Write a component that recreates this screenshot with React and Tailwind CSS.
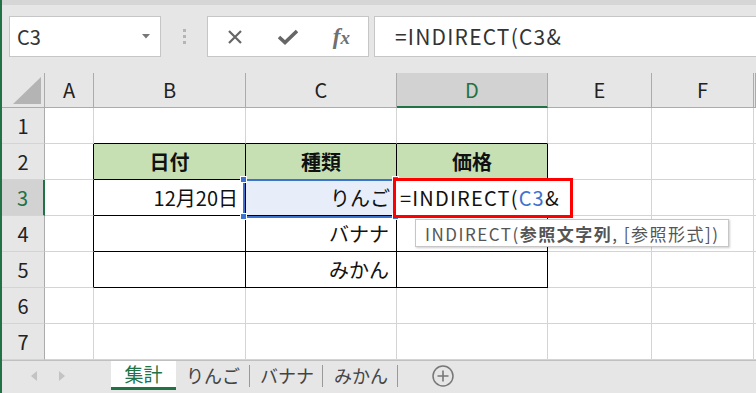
import React from 'react';

const COLS = [
  { key: 'hdr', w: 'w-[43px]' },
  { key: 'A', w: 'w-[49px]' },
  { key: 'B', w: 'w-[152px]' },
  { key: 'C', w: 'w-[151px]' },
  { key: 'D', w: 'w-[151px]' },
  { key: 'E', w: 'w-[104px]' },
  { key: 'F', w: 'w-[102px]' },
  { key: 'G', w: 'flex-1' },
];

const DATA = {
  B2: { text: '日付', head: true },
  C2: { text: '種類', head: true },
  D2: { text: '価格', head: true },
  B3: { text: '12月20日' },
  C3: { text: 'りんご', selected: true },
  C4: { text: 'バナナ' },
  C5: { text: 'みかん' },
};

const FONT = "font-['Noto_Sans_CJK_JP','Noto_Sans',sans-serif]";

function ColumnHeader() {
  return (
    <div className="flex h-[35px]">
      {COLS.map((c) => {
        if (c.key === 'hdr') {
          return (
            <div key={c.key} className={`${c.w} relative shrink-0 border-r border-b border-[#ababab] bg-[#e6e6e6]`}>
              <svg className="absolute left-[11px] top-[4px]" width="28" height="28" viewBox="0 0 28 28">
                <polygon points="28,0 28,27 0,27" fill="#b4b4b4" />
              </svg>
            </div>
          );
        }
        const active = c.key === 'D';
        return (
          <div
            key={c.key}
            className={`${c.w} shrink-0 flex items-center justify-center text-[20px] border-r ${
              active
                ? 'bg-[#d2d2d2] text-[#217346] border-b-2 border-b-[#217346] border-r-[#ababab]'
                : 'bg-[#e6e6e6] text-[#222] border-b border-[#ababab]'
            }`}
          >
            {c.key !== 'G' ? c.key : ''}
          </div>
        );
      })}
    </div>
  );
}

function Row({ n }) {
  return (
    <div className="flex h-[36px]">
      {COLS.map((c) => {
        if (c.key === 'hdr') {
          const active = n === 3;
          return (
            <div
              key={c.key}
              className={`${c.w} shrink-0 flex items-center justify-center text-[20px] border-b border-b-[#d4d4d4] ${
                active
                  ? 'bg-[#d2d2d2] text-[#217346] border-r-2 border-r-[#217346]'
                  : 'bg-[#e6e6e6] text-[#222] border-r border-r-[#ababab]'
              }`}
            >
              {n}
            </div>
          );
        }
        const id = c.key + n;
        const cell = DATA[id];
        const inTable = n >= 2 && n <= 5;
        const rightBlack = inTable && ['A', 'B', 'C', 'D'].includes(c.key);
        const bottomBlack = n >= 1 && n <= 5 && ['B', 'C', 'D'].includes(c.key);
        let cls = `${c.w} shrink-0 relative flex items-center text-[20px] text-[#111] border-r border-b `;
        cls += rightBlack ? 'border-r-black ' : 'border-r-[#d4d4d4] ';
        cls += bottomBlack ? 'border-b-black ' : 'border-b-[#d4d4d4] ';
        if (cell && cell.head) cls += 'bg-[#c6e0b4] justify-center font-bold ';
        else if (cell && cell.selected) cls += 'bg-[#e8eef9] justify-end pr-[6px] ';
        else cls += 'bg-white justify-end pr-[7px] ';
        return (
          <div key={c.key} className={cls}>
            {cell ? cell.text : ''}
          </div>
        );
      })}
    </div>
  );
}

function Handle({ className }) {
  return <div className={`absolute w-[7px] h-[7px] bg-[#3c72d0] border border-white ${className}`} />;
}

export default function App() {
  return (
    <div className={`relative flex w-[756px] h-[393px] overflow-hidden bg-[#e6e6e6] ${FONT}`}>
      <div className="w-[2px] shrink-0 bg-[#217346]" />
      <div className="flex-1 flex flex-col min-w-0">
        <div className="h-[5px] bg-[#d6d6d6]" />
        {/* formula toolbar */}
        <div className="h-[68px] flex items-start pt-[11px] pl-[7px]">
          <div className="w-[152px] h-[41px] bg-white border border-[#c6c6c6] flex items-center pl-[7px] pr-[10px]">
            <span className="flex-1 text-[20px] text-[#333] leading-none">C3</span>
            <svg width="8" height="5" viewBox="0 0 8 5">
              <polygon points="0,0 8,0 4,4.5" fill="#777" />
            </svg>
          </div>
          <div className="w-[46px] h-[41px] flex flex-col items-center justify-center gap-[3px]">
            <div className="w-[3px] h-[3px] bg-[#b5b5b5]" />
            <div className="w-[3px] h-[3px] bg-[#b5b5b5]" />
            <div className="w-[3px] h-[3px] bg-[#b5b5b5]" />
          </div>
          <div className="w-[162px] h-[41px] bg-white border border-[#c6c6c6] flex items-center">
            <div className="w-[54px] flex justify-center">
              <svg width="16" height="16" viewBox="0 0 16 16">
                <path d="M2 2 L14 14 M14 2 L2 14" stroke="#666" strokeWidth="2.2" />
              </svg>
            </div>
            <div className="w-[54px] flex justify-center">
              <svg width="20" height="16" viewBox="0 0 20 16">
                <path d="M1 8 L7 13.5 L19 2" stroke="#666" strokeWidth="3.6" fill="none" />
              </svg>
            </div>
            <div className="w-[54px] flex justify-center">
              <span className="font-['Liberation_Serif',serif] italic font-bold text-[23px] text-[#707070] leading-none">
                f<span className="text-[19px]">x</span>
              </span>
            </div>
          </div>
          <div className="ml-[5px] flex-1 h-[41px] bg-white border-y border-l border-[#c6c6c6] flex items-center pl-[20px]">
            <span className="text-[21px] text-[#333] leading-none tracking-[1.2px]">=INDIRECT(C3&amp;</span>
          </div>
        </div>
        {/* sheet */}
        <div className="flex flex-col">
          <ColumnHeader />
          {[1, 2, 3, 4, 5, 6, 7].map((n) => (
            <Row key={n} n={n} />
          ))}
        </div>
        {/* sheet tabs */}
        <div className="flex-1 flex items-start border-t border-[#c0c0c0] bg-[#e6e6e6]">
          <div className="w-[109px] h-[29px] flex items-center pl-[29px] gap-[22px]">
            <svg width="6" height="10" viewBox="0 0 6 10">
              <polygon points="6,0 6,10 0,5" fill="#c3c3c3" />
            </svg>
            <svg width="6" height="10" viewBox="0 0 6 10">
              <polygon points="0,0 0,10 6,5" fill="#c3c3c3" />
            </svg>
          </div>
          <div className="w-[65px] h-[29px] bg-white border-b-[3px] border-[#217346] flex items-center justify-center text-[19px] text-[#217346]">
            集計
          </div>
          <div className="h-[29px] flex items-center text-[18px] text-[#444]">
            <span className="pl-[10px] pr-[9px]">りんご</span>
            <span className="w-px h-[22px] bg-[#999]" />
            <span className="pl-[10px] pr-[8px]">バナナ</span>
            <span className="w-px h-[22px] bg-[#999]" />
            <span className="pl-[11px] pr-[9px]">みかん</span>
            <span className="w-px h-[22px] bg-[#999]" />
          </div>
          <div className="ml-[34px] h-[29px] flex items-center">
            <svg width="22" height="22" viewBox="0 0 22 22">
              <circle cx="11" cy="11" r="10" stroke="#777" strokeWidth="1.5" fill="none" />
              <path d="M11 5.5 V16.5 M5.5 11 H16.5" stroke="#777" strokeWidth="1.6" />
            </svg>
          </div>
        </div>
      </div>

      {/* selection on C3 */}
      <div className="absolute left-[243px] top-[179px] w-[154px] h-[39px] border-2 border-[#3c72d0] pointer-events-none" />
      <Handle className="left-[240px] top-[176px]" />
      <Handle className="left-[392px] top-[176px]" />
      <Handle className="left-[240px] top-[213px]" />
      <Handle className="left-[392px] top-[213px]" />

      {/* editing D3 */}
      <div className="absolute left-[393px] top-[178px] w-[180px] h-[40px] bg-white border-[3px] border-[#ff0000] flex items-center pl-[4px] text-[20px] text-[#111] leading-none tracking-[1.2px]">
        =INDIRECT(<span className="text-[#3c72d0]">C3</span>&amp;
      </div>

      {/* function tooltip */}
      <div className="absolute left-[415px] top-[219px] w-[314px] h-[28px] bg-white border border-[#c6c6c6] shadow-[1px_1px_2px_rgba(0,0,0,0.2)] flex items-center pl-[9px] text-[17px] text-[#555] leading-none whitespace-nowrap tracking-[1.5px]">
        INDIRECT(<b className="font-bold">参照文字列</b>, [参照形式])
      </div>
    </div>
  );
}
